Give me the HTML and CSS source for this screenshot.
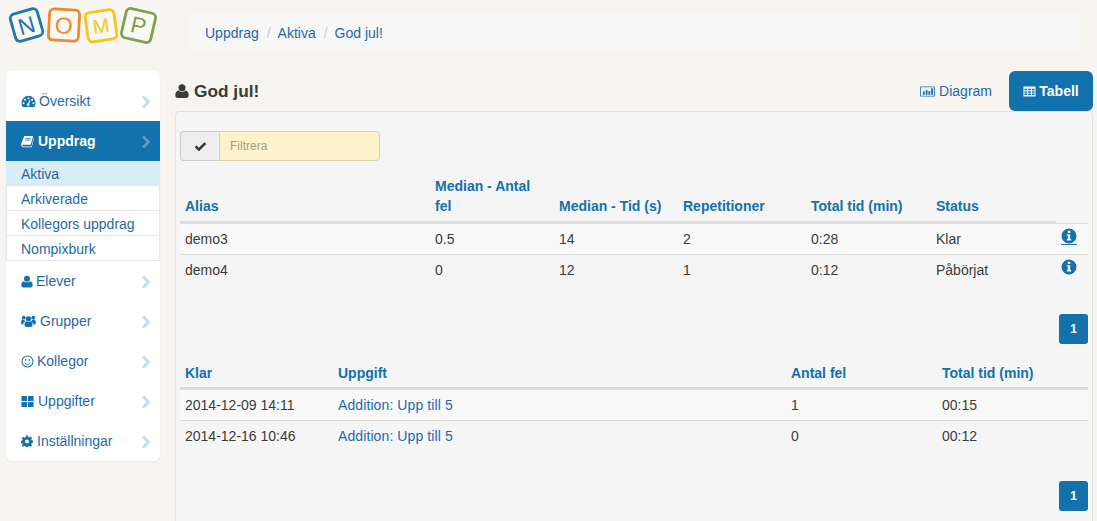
FILE: index.html
```html
<!DOCTYPE html>
<html lang="sv">
<head>
<meta charset="utf-8">
<title>Nomp</title>
<link rel="stylesheet" href="styles.css">
</head>
<body>
<svg width="0" height="0" class="defs">
  <symbol id="i-user" viewBox="0 0 14 14"><circle cx="7" cy="3.800" r="3.500"/><path d="M0.300 11.200C0.300 8.600 1.600 6.800 3.400 6.600 4.300 7.500 5.600 8 7 8s2.700-.5 3.600-1.400C12.400 6.800 13.700 8.600 13.700 11.200 13.700 12.800 12.700 14 11.200 14H2.800C1.300 14 .3 12.800 .3 11.200Z"/></symbol>
  <symbol id="i-gauge" viewBox="0 0 16 14"><path fill-rule="evenodd" d="M8 1.500a7.500 7.500 0 0 1 7.500 7.500c0 1.700-.5 3.200-1.400 4.500H1.900C1 12.200.5 10.700.5 9A7.500 7.500 0 0 1 8 1.500ZM8 3a1.100 1.100 0 1 0 0 2.200A1.100 1.100 0 0 0 8 3ZM4.200 4.600a1.100 1.100 0 1 0 0 2.200 1.100 1.100 0 0 0 0-2.200ZM11.800 4.600a1.100 1.100 0 1 0 0 2.200 1.100 1.100 0 0 0 0-2.200ZM2.700 8.300a1.100 1.100 0 1 0 0 2.200 1.100 1.100 0 0 0 0-2.200ZM13.300 8.300a1.100 1.100 0 1 0 0 2.200 1.100 1.100 0 0 0 0-2.200ZM9.300 5.800 7.300 9.300a1.500 1.500 0 1 0 1.500.5L10.100 6.200Z"/></symbol>
  <symbol id="i-book" viewBox="0 0 14 14"><path fill-rule="evenodd" d="M3.600 1H13.200L10.500 10.400H2.300C1.500 10.400 1.300 11 1.500 11.500 1.700 12.100 2.200 12.400 2.900 12.400H11.200L13.600 3.500 14 4 11.600 13.200H2.800C1.500 13.200 .6 12.400.3 11.200 0 10.200.2 9.400.6 8.400L3.600 1ZM5 3.200 4.800 4H10.800L11 3.200ZM4.400 5.200 4.200 6H10.200L10.400 5.200Z"/></symbol>
  <symbol id="i-users" viewBox="0 0 16 14"><circle cx="8" cy="4.700" r="2.800"/><circle cx="3" cy="3.300" r="2"/><circle cx="13" cy="3.300" r="2"/><path d="M3.700 11c0-2.400 1-3.700 2.300-3.700.6.500 1.200.8 2 .8s1.400-.3 2-.8c1.300 0 2.300 1.300 2.300 3.700 0 1.500-.9 2.300-2 2.300H5.700c-1.100 0-2-.8-2-2.300ZM.2 7.500c0-1 .6-2.300 1.300-2.300.5.400 1 .6 1.500.6l.6-.1c.1 1 .4 1.400 1 2-1.300.4-2.100 1.300-2.400 3H1.100C.5 10.700.2 10 .2 7.500ZM15.800 7.500c0 2.500-.3 3.200-.9 3.200h-1.700c-.3-1.700-1.100-2.600-2.400-3 .6-.6.900-1 1-2l.6.100c.5 0 1-.2 1.500-.6.700 0 1.900 1.300 1.900 2.300Z"/></symbol>
  <symbol id="i-smile" viewBox="0 0 14 14"><circle cx="7" cy="7" r="5.900" fill="none" stroke="currentColor" stroke-width="1.100"/><circle cx="5" cy="5.300" r=".9"/><circle cx="9" cy="5.300" r=".9"/><path d="M4 8.300c.6 1.300 1.700 1.900 3 1.900s2.400-.6 3-1.900" fill="none" stroke="currentColor" stroke-width="1"/></symbol>
  <symbol id="i-grid" viewBox="0 0 14 14"><rect x="0.500" y="1" width="6" height="5.500" rx=".7"/><rect x="7.500" y="1" width="6" height="5.500" rx=".7"/><rect x="0.500" y="7.500" width="6" height="5.500" rx=".7"/><rect x="7.500" y="7.500" width="6" height="5.500" rx=".7"/></symbol>
  <symbol id="i-cog" viewBox="0 0 14 14"><path fill-rule="evenodd" d="M5.800.5h2.400l.4 1.900 1.100.5 1.600-1.100 1.700 1.700-1.100 1.600.5 1.100 1.900.4v2.400l-1.900.4-.5 1.100 1.100 1.600-1.700 1.700-1.600-1.100-1.100.5-.4 1.900H5.800l-.4-1.900-1.100-.5-1.600 1.100L1 12.400l1.100-1.600-.5-1.100-1.900-.4V6.900l1.900-.4.5-1.100L1 3.800l1.700-1.700 1.600 1.100 1.100-.5ZM7 5.200a2.300 2.300 0 1 0 0 4.600 2.300 2.300 0 0 0 0-4.600Z"/></symbol>
  <symbol id="i-chart" viewBox="0 0 16 14"><path d="M1 1.500h14a1 1 0 0 1 .9 1v9a1 1 0 0 1-.9 1H1a1 1 0 0 1-.9-1v-9a1 1 0 0 1 .9-1Zm0 1v9h14v-9Z"/><rect x="3" y="7" width="2" height="3.500"/><rect x="6" y="5.500" width="2" height="5"/><rect x="9" y="6.500" width="2" height="4"/><rect x="12" y="3.500" width="2" height="7"/></symbol>
  <symbol id="i-table" viewBox="0 0 14 14"><path fill-rule="evenodd" d="M.5 1.500h13v11H.5Zm1 2.500v1.700h3V4Zm4 0v1.700h3V4Zm4 0v1.700h3V4Zm-8 2.600v1.700h3V6.600Zm4 0v1.700h3V6.600Zm4 0v1.700h3V6.600Zm-8 2.600v1.700h3V9.200Zm4 0v1.700h3V9.200Zm4 0v1.700h3V9.200Z"/></symbol>
  <symbol id="i-info" viewBox="0 0 16 16"><path fill-rule="evenodd" d="M8 .5a7.500 7.500 0 1 1 0 15 7.500 7.500 0 0 1 0-15ZM6.800 2.800v2.300h2.500V2.800ZM5.800 6.200v1.400h1v3.300h-1v1.500h4.400v-1.500h-1V6.200Z"/></symbol>
  <symbol id="i-check" viewBox="0 0 14 14"><path d="M5.200 11.600.8 7.200l1.900-1.900 2.500 2.500 6.100-6.100 1.900 1.900Z" transform="translate(0 .6)"/></symbol>
  <symbol id="i-chev" viewBox="0 0 10 14"><path d="M2 1.500 7.500 7 2 12.500" fill="none" stroke="currentColor" stroke-width="2.800"/></symbol>
</svg>

<header class="top">
  <svg class="logo" width="160" height="48" viewBox="0 0 160 48">
    <g transform="rotate(-16 26.500 25)"><rect x="12.500" y="11" width="28" height="28" rx="4.500" class="lg-blue"/><text x="26.500" y="33.500" class="lt lt-blue">N</text></g>
    <g transform="rotate(3 64 25)"><rect x="49" y="9.500" width="30" height="31" rx="4.500" class="lg-orange"/><text x="64" y="33.500" class="lt lt-orange">O</text></g>
    <g transform="rotate(-8 101 25.500)"><rect x="86.500" y="11" width="29" height="29.500" rx="4.500" class="lg-yellow"/><text x="101" y="33" class="lt lt-yellow">M</text></g>
    <g transform="rotate(13 138.500 25.500)"><rect x="123.500" y="10.500" width="30" height="30" rx="4.500" class="lg-green"/><text x="138.500" y="33.500" class="lt lt-green">P</text></g>
  </svg>
  <nav class="crumbs">
    <a>Uppdrag</a><span class="sep">/</span><a>Aktiva</a><span class="sep">/</span><a>God jul!</a>
  </nav>
</header>

<div class="page">
  <aside class="side">
    <a class="item"><svg class="ic ic-gauge"><use href="#i-gauge"/></svg><span>Översikt</span><svg class="chev"><use href="#i-chev"/></svg></a>
    <a class="item active"><svg class="ic ic-book"><use href="#i-book"/></svg><span>Uppdrag</span><svg class="chev"><use href="#i-chev"/></svg></a>
    <ul class="sub">
      <li class="on">Aktiva</li>
      <li>Arkiverade</li>
      <li>Kollegors uppdrag</li>
      <li>Nompixburk</li>
    </ul>
    <a class="item"><svg class="ic ic-user"><use href="#i-user"/></svg><span>Elever</span><svg class="chev"><use href="#i-chev"/></svg></a>
    <a class="item"><svg class="ic ic-users"><use href="#i-users"/></svg><span>Grupper</span><svg class="chev"><use href="#i-chev"/></svg></a>
    <a class="item"><svg class="ic ic-smile"><use href="#i-smile"/></svg><span>Kollegor</span><svg class="chev"><use href="#i-chev"/></svg></a>
    <a class="item"><svg class="ic ic-grid"><use href="#i-grid"/></svg><span>Uppgifter</span><svg class="chev"><use href="#i-chev"/></svg></a>
    <a class="item"><svg class="ic ic-cog"><use href="#i-cog"/></svg><span>Inställningar</span><svg class="chev"><use href="#i-chev"/></svg></a>
  </aside>

  <main class="main">
    <div class="head">
      <h1><svg class="h-ic"><use href="#i-user"/></svg>God jul!</h1>
      <div class="tabs">
        <a class="tab"><svg class="tab-ic"><use href="#i-chart"/></svg>Diagram</a>
        <a class="tab sel"><svg class="tab-ic t2"><use href="#i-table"/></svg>Tabell</a>
      </div>
    </div>
    <section class="panel">
      <div class="filter">
        <span class="addon"><svg class="chk"><use href="#i-check"/></svg></span>
        <input class="finput" placeholder="Filtrera">
      </div>
      <table class="tbl t-one">
        <colgroup><col class="c1"><col class="c2"><col class="c3"><col class="c4"><col class="c5"><col class="c6"><col class="c7"></colgroup>
        <thead>
          <tr><th>Alias</th><th>Median - Antal fel</th><th>Median - Tid (s)</th><th>Repetitioner</th><th>Total tid (min)</th><th>Status</th><th class="blank"></th></tr>
        </thead>
        <tbody>
          <tr class="odd"><td>demo3</td><td>0.5</td><td>14</td><td>2</td><td>0:28</td><td>Klar</td><td class="info"><svg class="inf"><use href="#i-info"/></svg><i class="uline"></i></td></tr>
          <tr><td>demo4</td><td>0</td><td>12</td><td>1</td><td>0:12</td><td>Påbörjat</td><td class="info"><svg class="inf"><use href="#i-info"/></svg></td></tr>
        </tbody>
      </table>
      <div class="pager p-one"><a class="pg">1</a></div>
      <table class="tbl t-two">
        <colgroup><col class="d1"><col class="d2"><col class="d3"><col class="d4"></colgroup>
        <thead>
          <tr><th>Klar</th><th>Uppgift</th><th>Antal fel</th><th>Total tid (min)</th></tr>
        </thead>
        <tbody>
          <tr class="odd"><td>2014-12-09 14:11</td><td class="lnk">Addition: Upp till 5</td><td>1</td><td>00:15</td></tr>
          <tr><td>2014-12-16 10:46</td><td class="lnk">Addition: Upp till 5</td><td>0</td><td>00:12</td></tr>
        </tbody>
      </table>
      <div class="pager p-two"><a class="pg">1</a></div>
    </section>
  </main>
</div>
</body>
</html>
```
FILE: styles.css
```css
* { box-sizing: border-box; }
html, body { margin: 0; height: 521px; overflow: hidden; }
body {
  background: #f7f5f2;
  color: #3b3b3b;
  font-family: "Liberation Sans", Arial, sans-serif;
  font-size: 14px;
  line-height: 20px;
}
.defs { display: block; height: 0; }
a { color: #1371ab; text-decoration: none; }

.top { display: flex; height: 71px; }
.logo { flex: none; display: block; }
.lg-blue, .lg-orange, .lg-yellow, .lg-green { fill: #f9f8f5; stroke-width: 2.800; }
.lg-blue { stroke: #2079a8; }
.lg-orange { stroke: #ef8a2b; }
.lg-yellow { stroke: #f6c71c; }
.lg-green { stroke: #7fa24a; }
.lt { font-family: "Liberation Sans", Arial, sans-serif; font-size: 23px; text-anchor: middle; }
.lt-blue { fill: #2079a8; }
.lt-orange { fill: #ef8a2b; }
.lt-yellow { fill: #f6c71c; font-size: 20px; }
.lt-green { fill: #7fa24a; }

.crumbs {
  margin: 14px 0 0 30px;
  width: 890px;
  height: 36px;
  padding: 9px 15px;
  background: #f7f7f7;
  border-radius: 4px;
  white-space: nowrap;
}
.crumbs a { color: #1f69a8; }
.sep { color: #ccc; padding: 0 7px 0 8px; }

.page { display: flex; align-items: flex-start; padding-left: 6px; }

.side {
  flex: none;
  width: 154px;
  height: 390px;
  margin-right: 15px;
  padding-top: 10px;
  background: #fff;
  border-radius: 6px;
  box-shadow: 0 1px 2px rgba(0,0,0,.06);
}
.item {
  display: flex;
  align-items: center;
  height: 40px;
  padding: 0 8px 0 15px;
  color: #1f69a8;
}
.item .ic { fill: #1371ab; color: #1371ab; flex: none; }
.ic-gauge { width: 15px; height: 14px; margin-right: 3px; }
.ic-book { width: 13px; height: 13px; margin-right: 4px; }
.ic-user { width: 12px; height: 13px; margin-right: 3px; }
.ic-users { width: 15px; height: 14px; margin-right: 4px; }
.ic-smile { width: 13px; height: 13px; margin-right: 3px; }
.ic-grid { width: 13px; height: 13px; margin-right: 4px; }
.ic-cog { width: 12px; height: 12px; margin-right: 4px; }
.item span { flex: 1; }
.chev { width: 10px; height: 14px; color: #c0dcee; flex: none; margin-top: 2px; margin-right: 1px; }
.item.active { background: #1371ab; color: #fff; font-weight: 700; }
.item.active .ic { fill: #fff; color: #fff; }
.item.active .chev { color: #5b9cc5; }
.sub { list-style: none; margin: 0; padding: 0; }
.sub li {
  height: 25px;
  padding: 2px 14px;
  color: #1f69a8;
  border: 1px solid #e7e7e7;
  border-width: 0 1px 1px 1px;
  line-height: 22px;
}
.sub li.on { background: #d9edf7; border-color: #d9edf7 #d9edf7 #e7e7e7; }

.main { flex: none; width: 918px; }
.head { display: flex; justify-content: space-between; height: 40px; }
h1 { margin: 0; padding-top: 9px; font-size: 17.300px; line-height: 22px; font-weight: 700; color: #3b3b3b; }
.h-ic { width: 14px; height: 14px; fill: #3b3b3b; margin-right: 5px; vertical-align: -1px; }
.tabs { display: flex; }
.tab {
  display: flex; align-items: center; justify-content: center;
  height: 40px; padding: 0 17px 0 0; color: #1f69a8;
}
.tab-ic { width: 15px; height: 13px; fill: #1371ab; margin-right: 4px; }
.tab.sel {
  width: 84px; padding: 0;
  background: #1371ab; color: #fff; font-weight: 700; border-radius: 6px;
}
.tab-ic.t2 { fill: #fff; width: 13px; margin-right: 3px; }

.panel {
  height: 430px;
  padding: 19px 4px 0 4px;
  background: #f5f5f5;
  border: 1px solid #e3e3e3;
  border-radius: 4px;
}
.filter { display: flex; width: 200px; height: 30px; }
.addon {
  width: 39px; flex: none; display: flex; align-items: center; justify-content: center;
  background: #eee; border: 1px solid #ccc; border-right: 0; border-radius: 4px 0 0 4px;
}
.chk { width: 13px; height: 13px; fill: #333; }
.finput {
  flex: 1; min-width: 0; height: 30px; padding: 0 10px;
  background: #fcf3cd; border: 1px solid #dcd3a8; border-radius: 0 4px 4px 0;
  font: 12px "Liberation Sans", Arial, sans-serif; color: #555; outline: 0;
}
.finput::placeholder { color: #a49e88; opacity: 1; }

.tbl { width: 908px; border-collapse: separate; border-spacing: 0; table-layout: fixed; }
.c1 { width: 250px; } .c2 { width: 124px; } .c3 { width: 124px; } .c4 { width: 128px; }
.c5 { width: 125px; } .c6 { width: 125px; } .c7 { width: 32px; }
.d1 { width: 153px; } .d2 { width: 453px; } .d3 { width: 151px; } .d4 { width: 151px; }
.tbl th {
  text-align: left; vertical-align: bottom; padding: 5px;
  color: #1371ab; font-weight: 700; line-height: 20px;
  border-bottom: 2px solid #ddd;
}
.t-two th { padding-top: 6px; padding-bottom: 4px; }
.tbl th.blank { border-bottom: 0; }
.tbl td { padding: 5px; height: 31px; border-top: 1px solid #ddd; line-height: 20px; vertical-align: top; }
.tbl .odd td { background: #f9f9f9; }
.lnk { color: #1f69a8; letter-spacing: .1px; }
.t-one { margin-top: 10px; }
.info { position: relative; }
.inf { width: 16px; height: 16px; fill: #1371ab; display: block; margin-top: -1px; }
.uline { position: absolute; left: 5px; top: 20px; width: 16px; height: 1px; background: #1371ab; }
.pager { display: flex; justify-content: flex-end; }
.p-one { margin-top: 29px; }
.p-two { margin-top: 30px; }
.pg {
  width: 29px; height: 30px; display: flex; align-items: center; justify-content: center;
  background: #1371ab; color: #fff; font-size: 12px; font-weight: 700; border-radius: 3px;
}
.t-two { margin-top: 13px; }
```
